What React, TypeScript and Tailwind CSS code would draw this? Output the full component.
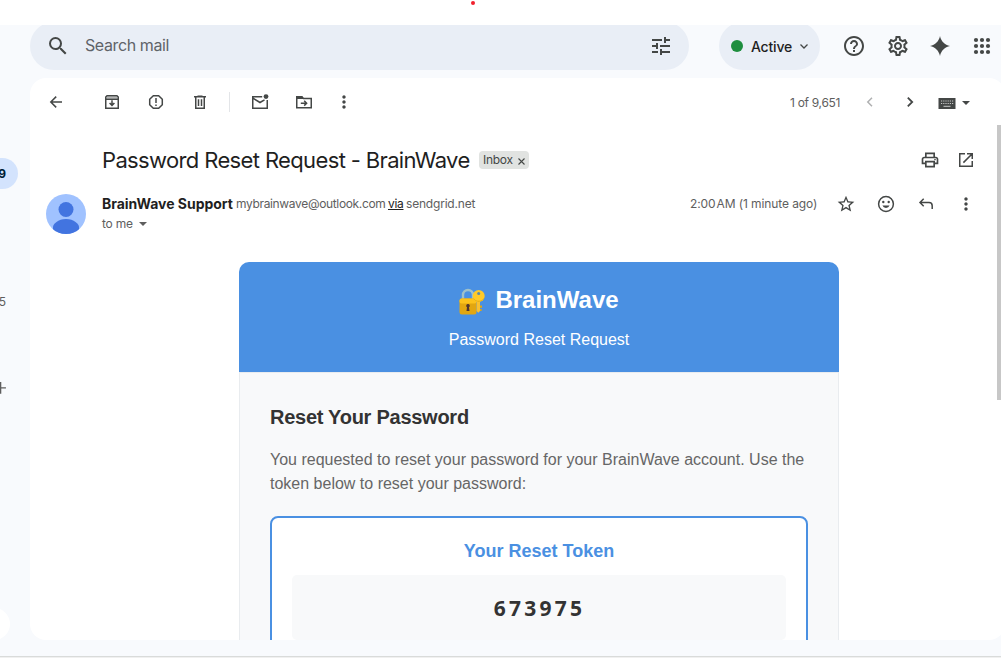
import type { ReactNode } from "react";
import {
  MdSearch, MdTune, MdHelpOutline, MdOutlineSettings, MdOutlinePrint,
  MdStarBorder, MdMoreVert,
} from "react-icons/md";

function Glyph({ children, className = "" }: { children: ReactNode; className?: string }) {
  return (
    <svg viewBox="0 0 20 20" fill="none" stroke="currentColor" strokeWidth="1.5" className={`size-5 shrink-0 ${className}`}>
      {children}
    </svg>
  );
}

const Back = () => <Glyph><path d="M16 10H5M10.2 4.6 4.8 10l5.4 5.4" /></Glyph>;
const Archive = () => (
  <Glyph>
    <path d="M3.75 7V16.25h12.5V7M3.75 7.2V5l1.3-1.25h9.9L16.25 5v2.2z" />
    <path d="M4.5 4.5h11v2h-11z" fill="currentColor" fillOpacity=".4" stroke="none" />
    <path d="M10 8.3v4.9M7.6 11l2.4 2.4 2.4-2.4" />
  </Glyph>
);
const Spam = () => (
  <Glyph>
    <path d="M7.3 3.7h5.4l3.6 3.6v5.4l-3.6 3.6H7.3l-3.6-3.6V7.3z" strokeLinejoin="round" />
    <path d="M10 6v5M10 12.4v1.7" />
  </Glyph>
);
const Trash = () => (
  <Glyph>
    <path d="M4 4.75h12M7.5 4.2h5M5.75 5v11.25h8.5V5M8.5 7.2v6.8M11.5 7.2v6.8" />
  </Glyph>
);
const Unread = () => (
  <Glyph>
    <path d="M12.2 4.75H2.75v11.5h14.5V8M3 6.2l7 4.3 4.5-2.7" />
    <circle cx="16" cy="4.6" r="2.4" fill="currentColor" stroke="none" />
  </Glyph>
);
const MoveTo = () => (
  <Glyph>
    <path d="M2.75 15.75V4.75h5l1.7 1.8h7.8v9.2z" />
    <path d="M2.5 4h5.6l2 3H2.5z" fill="currentColor" stroke="none" />
    <path d="M6.8 11.2h5.6M10.2 8.8l2.4 2.4-2.4 2.4" />
  </Glyph>
);
const OpenNew = () => (
  <Glyph><path d="M9 3.75H3.75v12.5h12.5V11M11 3.75h5.25V9M16 4 7.4 12.6" /></Glyph>
);
const Smile = () => (
  <Glyph>
    <circle cx="10" cy="10" r="7.4" />
    <path d="M6.4 11.6h7.2a3.9 3.9 0 0 1-7.2 0z" fill="currentColor" stroke="none" />
    <circle cx="7.3" cy="8" r="1.2" fill="currentColor" stroke="none" />
    <circle cx="12.7" cy="8" r="1.2" fill="currentColor" stroke="none" />
  </Glyph>
);
const Reply = () => <Glyph><path d="M7.7 4.8 4 8.5l3.7 3.7M4.2 8.5H13q3.2 0 3.2 3.2V15" /></Glyph>;
const Left = () => <Glyph className="text-[#b0b1b2]"><path d="m12 5.8-4.2 4.2 4.2 4.2" /></Glyph>;
const Right = () => <Glyph><path d="m7.8 5.6 4.4 4.4-4.4 4.4" strokeWidth="1.8" /></Glyph>;
const Caret = () => (
  <svg viewBox="0 0 8 4" className="h-1 w-2 shrink-0" fill="currentColor"><path d="M0 0h8L4 4z" /></svg>
);
const Spark = () => (
  <svg viewBox="0 0 20 20" className="size-5" fill="currentColor">
    <path d="M10 0C11 5.2 14.8 9 20 10 14.8 11 11 14.8 10 20 9 14.8 5.2 11 0 10 5.2 9 9 5.2 10 0Z" />
  </svg>
);
const Apps = () => (
  <svg viewBox="0 0 24 24" className="size-6 shrink-0" fill="currentColor">
    {[6, 12, 18].map((y) => [6, 12, 18].map((x) => <circle key={`${x}-${y}`} cx={x} cy={y} r="2.1" />))}
  </svg>
);
const Keyboard = () => (
  <svg viewBox="0 0 18 11" className="h-[11px] w-[18px] shrink-0">
    <path d="M.5 0h17v11H.5z" fill="currentColor" />
    <path d="M3 3h12.5M3 5.5h12.5" stroke="#c9cac9" strokeWidth="1.1" strokeDasharray="1.2 1" />
    <path d="M5.5 8.3h7" stroke="#c9cac9" />
  </svg>
);

function LockKey() {
  return (
    <svg viewBox="0 0 26 27" className="h-[27px] w-[26px] shrink-0">
      <path d="M4 12V7a5 5 0 0 1 10 0v5" fill="none" stroke="#9fc1c9" strokeWidth="2.4" />
      <rect x="0.5" y="10.5" width="17" height="16" rx="2.5" fill="#e2a610" />
      <rect x="0.5" y="10.5" width="17" height="5" rx="2" fill="#fcc21b" />
      <path d="M9 16a1.8 1.8 0 0 1 1 3.3l.5 3.7h-3l.5-3.7A1.8 1.8 0 0 1 9 16z" fill="#4e342e" />
      <path d="M17.6 12h3.4v11l-1.7 1.8-1.7-1.8z" fill="#fbc02d" />
      <path d="M21 17.5h2v2.3h-2zm0 3.5h1.6v2H21z" fill="#e2a610" />
      <circle cx="19.7" cy="7.9" r="6" fill="#ffca28" />
      <path d="M14 9.5a6 6 0 0 0 11.4 0 6.6 6.6 0 0 1-11.4 0z" fill="#e2a610" />
      <circle cx="19.7" cy="5.4" r="1.5" fill="#5a8aaa" />
    </svg>
  );
}

function TopBar() {
  return (
    <header className="flex h-[53px] shrink-0 items-start overflow-hidden text-[#444746]">
      <div className="-mt-[3px] ml-[30px] flex h-12 w-[659px] shrink-0 items-center rounded-full bg-[#e9eef6] pl-4 pr-4">
        <MdSearch className="size-6 shrink-0" />
        <span className="ml-[15px] whitespace-nowrap pb-0.5 text-[16px] tracking-[-0.4px] text-[#5f6368]">Search mail</span>
        <MdTune className="ml-auto size-6 shrink-0" />
      </div>
      <div className="-mt-[3px] ml-[30px] flex h-12 w-[101px] shrink-0 items-center rounded-full bg-[#e9eef6] pl-3">
        <span className="size-3 rounded-full bg-[#1e8e3e]" />
        <span className="ml-2 w-[42px] text-[14px] font-medium tracking-[-0.2px] text-[#1f1f1f]">Active</span>
        <svg viewBox="0 0 8 5" className="ml-[7px] h-[5px] w-2" fill="none" stroke="currentColor" strokeWidth="1.3"><path d="m.5.5 3.5 3.5L7.5.5" /></svg>
      </div>
      <div className="-mt-[3px] flex h-12 shrink-0 items-center pl-[22px]">
        <MdHelpOutline className="size-6" />
        <MdOutlineSettings className="ml-5 size-6" />
        <span className="ml-5"><Spark /></span>
        <span className="ml-5"><Apps /></span>
      </div>
    </header>
  );
}

function Toolbar() {
  return (
    <div className="flex h-12 shrink-0 items-center pl-4 text-[#444746]">
      <Back />
      <div className="ml-9 flex gap-6"><Archive /><Spam /><Trash /></div>
      <span className="ml-[19px] h-5 w-px bg-[#e3e5e8]" />
      <div className="ml-5 flex gap-6"><Unread /><MoveTo /></div>
      <MdMoreVert className="ml-5 size-5" />
      <span className="ml-[436px] w-[70px] whitespace-nowrap pt-0.5 text-[12px] tracking-[-0.3px] text-[#5e5e5e]">1 of 9,651</span>
      <Left />
      <span className="ml-5"><Right /></span>
      <span className="ml-[18px] mt-[3px]"><Keyboard /></span>
      <span className="ml-1.5 mt-px"><Caret /></span>
    </div>
  );
}

function MessageHead() {
  return (
    <>
      <div className="flex h-[68px] shrink-0 items-center pl-[72px] text-[#444746]">
        <h1 className="w-[377px] whitespace-nowrap pb-px text-[22px] leading-7 tracking-[-0.64px] text-[#1f1f1f]">Password Reset Request - BrainWave</h1>
        <span className="flex h-[18px] w-[50px] items-center gap-1 rounded bg-[#e1e3e1] pl-1 text-[12px] tracking-[-0.3px]">
          Inbox
          <svg viewBox="0 0 7 7" className="ml-px mt-0.5 size-[7px]" stroke="currentColor" strokeWidth="1.1"><path d="m.5.5 6 6m0-6-6 6" /></svg>
        </span>
        <MdOutlinePrint className="ml-[391px] size-5" />
        <span className="ml-4"><OpenNew /></span>
      </div>
      <div className="flex h-10 shrink-0 pl-4">
        <svg viewBox="0 0 40 40" className="size-10 shrink-0">
          <defs><clipPath id="face"><circle cx="20" cy="20" r="20" /></clipPath></defs>
          <g clipPath="url(#face)">
            <path fill="#a0c2ff" d="M0 0h40v40H0z" />
            <circle cx="20" cy="15.5" r="7.5" fill="#4274e0" />
            <path fill="#4274e0" d="M7 33c0-3 5-8 13-8s13 5 13 8v7H7z" />
          </g>
        </svg>
        <div className="ml-4 flex w-[588px] shrink-0 flex-col text-[12px] text-[#5e5e5e]">
          <div className="flex h-5 items-center whitespace-nowrap">
            <b className="w-[134px] pb-0.5 text-[14px] font-bold tracking-[-0.03px] text-[#1f1f1f]">BrainWave Support</b>
            <span className="w-[152px] tracking-[-0.34px]">mybrainwave@outlook.com</span>
            <span className="w-[18px] text-[#222] underline tracking-[-0.3px]">via</span>
            <span className="tracking-[-0.2px]">sendgrid.net</span>
          </div>
          <div className="flex h-5 items-center"><span className="w-[37px] tracking-[-0.2px]">to me</span><Caret /></div>
        </div>
        <div className="flex h-5 shrink-0 items-center text-[#444746]">
          <span className="w-[146px] whitespace-nowrap text-[12px] tracking-[-0.1px] text-[#5e5e5e]">2:00<span className="ml-px">AM (1 minute ago)</span></span>
          <MdStarBorder className="size-5" />
          <span className="ml-5"><Smile /></span>
          <span className="ml-5"><Reply /></span>
          <MdMoreVert className="ml-5 size-5" />
        </div>
      </div>
    </>
  );
}

function EmailBody() {
  return (
    <article className="ml-[209px] mt-7 flex w-[600px] shrink-0 flex-col font-['Liberation_Sans',Arial,sans-serif]">
      <div className="flex h-[110px] flex-col items-center rounded-t-[10px] bg-[#4a90e2] text-white">
        <div className="mt-[23px] flex h-[30px] items-center gap-[10px] text-[24px] font-bold">
          <span className="mt-0.5"><LockKey /></span>BrainWave
        </div>
        <p className="mt-[13px] text-[16px] leading-6">Password Reset Request</p>
      </div>
      <div className="h-[400px] border border-[#e9ecef] bg-[#f8f9fa] px-[30px] pt-[30px]">
        <h2 className="text-[20px] font-bold leading-7 tracking-[-0.26px] text-[#333]">Reset Your Password</h2>
        <p className="mt-[17px] whitespace-nowrap text-[16px] leading-6 text-[#666]">
          You requested to reset your password for your BrainWave account. Use the<br />token below to reset your password:
        </p>
        <div className="mt-5 h-60 rounded-lg border-2 border-[#4a90e2] bg-white px-5 pt-[19px] text-center">
          <h3 className="text-[18px] font-bold leading-7 text-[#4a90e2]">Your Reset Token</h3>
          <div className="mt-[10px] h-[65px] rounded-[5px] bg-[#f8f9fa] pl-px pt-[17px] font-['Noto_Sans',sans-serif] text-[21px] font-bold leading-8 tracking-[3.2px] text-[#333]">673975</div>
        </div>
      </div>
    </article>
  );
}

export default function App() {
  return (
    <div className="flex h-[658px] w-[1001px] flex-col overflow-hidden bg-white font-[Inter,sans-serif]">
      <div className="flex h-[25px] shrink-0 justify-center pr-[55px]"><span className="mt-px size-1 rounded-full bg-[#f0202d]" /></div>
      <div className="flex h-[631px] shrink-0 flex-col bg-[#f8fafd]">
        <TopBar />
        <div className="flex h-[562px] shrink-0">
          <nav className="flex w-[30px] shrink-0 flex-col overflow-hidden text-[12px]">
            <span className="mt-20 flex h-8 w-[18px] items-center justify-end rounded-r-full bg-[#d3e3fd] pr-3 font-bold text-[#001d35]">9</span>
            <span className="mt-[105px] flex h-4 w-[6px] items-center justify-end text-[#5e5e5e]">5</span>
            <svg viewBox="0 0 6 12" className="mt-[72px] h-3 w-1.5" stroke="#5e5e5e" strokeWidth="1.5"><path d="M.5 0v12M0 6h6" /></svg>
            <span className="mt-[214px] -ml-[22px] size-8 shrink-0 rounded-full bg-white" />
          </nav>
          <main className="flex w-[975px] shrink-0 flex-col overflow-hidden rounded-2xl bg-white">
            <div className="flex">
              <div className="flex w-[967px] shrink-0 flex-col">
                <Toolbar />
                <MessageHead />
                <EmailBody />
              </div>
              <span className="mt-[47px] h-[275px] w-2 shrink-0 bg-[#c7c7c7]" />
            </div>
          </main>
        </div>
      </div>
      <div className="h-px shrink-0 bg-[#d9dbda]" />
      <div className="h-px shrink-0 bg-[#f0f0f0]" />
    </div>
  );
}
